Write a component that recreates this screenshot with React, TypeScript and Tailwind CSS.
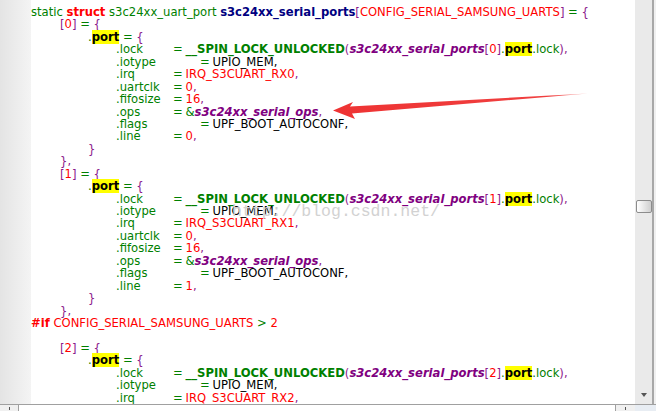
import React from "react";

const G = ({ children }: { children: React.ReactNode }) => <span className="text-[#008000]">{children}</span>;
const R = ({ children }: { children: React.ReactNode }) => <span className="text-[#ff0000]">{children}</span>;
const P = ({ children }: { children: React.ReactNode }) => <span className="text-[#8b1a8b]">{children}</span>;
const K = ({ children }: { children: React.ReactNode }) => <span className="text-black">{children}</span>;
const I = ({ children }: { children: React.ReactNode }) => <span className="text-[#800080] italic font-bold">{children}</span>;
const Y = ({ children }: { children: React.ReactNode }) => <span className="bg-[#ffff00] text-black font-bold">{children}</span>;

const Line = ({ indent, children }: { indent: 0 | 1 | 2 | 3; children?: React.ReactNode }) => {
  const pad = indent === 0 ? "pl-0" : indent === 1 ? "pl-[29px]" : indent === 2 ? "pl-[57px]" : "pl-[85px]";
  return <div className={`h-[12.45px] whitespace-pre ${pad}`}>{children}</div>;
};

const Field = ({ name, wide, children }: { name: string; wide?: boolean; children: React.ReactNode }) => (
  <Line indent={3}>
    <span className={`inline-block text-[#008000] ${wide ? "w-[84px]" : "w-[57px]"}`}>{name}</span>
    <span className="inline-block w-[12.5px] text-[#008000]">=</span>
    {children}
  </Line>
);

const Block = ({ n }: { n: string }) => (
  <>
    <Line indent={2}>
      <G>.</G>
      <Y>port</Y>
      <G> = </G>
      <P>{"{"}</P>
    </Line>
    <Field name=".lock">
      <span className="font-bold text-[#008000]">__SPIN_LOCK_UNLOCKED</span>
      <P>(</P>
      <I>s3c24xx_serial_ports</I>
      <P>[</P>
      <R>{n}</R>
      <P>]</P>
      <G>.</G>
      <Y>port</Y>
      <G>.lock</G>
      <P>),</P>
    </Field>
    <Field name=".iotype" wide>
      <K>UPIO_MEM,</K>
    </Field>
    <Field name=".irq">
      <R>IRQ_S3CUART_RX{n}</R>
      <P>,</P>
    </Field>
    {n !== "2" && (
      <>
        <Field name=".uartclk">
          <R>0</R>
          <P>,</P>
        </Field>
        <Field name=".fifosize">
          <R>16</R>
          <P>,</P>
        </Field>
        <Field name=".ops">
          <G>&amp;</G>
          <I>s3c24xx_serial_ops</I>
          <P>,</P>
        </Field>
        <Field name=".flags" wide>
          <K>UPF_BOOT_AUTOCONF,</K>
        </Field>
        <Field name=".line">
          <R>{n}</R>
          <P>,</P>
        </Field>
        <Line indent={2}>
          <P>{"}"}</P>
        </Line>
        <Line indent={1}>
          <P>{"},"}</P>
        </Line>
      </>
    )}
  </>
);

export default function App() {
  return (
    <div className="relative w-[656px] h-[411px] overflow-hidden bg-white flex flex-col">
      <div className="flex flex-1 min-h-0">
        <div className="w-[31px] shrink-0 bg-gradient-to-r from-[#e4e4e4] to-[#f4f4f4]" />
        <div
          className="flex-1 min-w-0 bg-white pt-[6px] text-[11.6px] leading-[12.45px] overflow-hidden"
          style={{ fontFamily: '"DejaVu Sans", Verdana, sans-serif' }}
        >
          <Line indent={0}>
            <G>static </G>
            <span className="font-bold text-[#ff0000]">struct</span>
            <G> s3c24xx_uart_port </G>
            <span className="font-bold text-[#000080]">s3c24xx_serial_ports</span>
            <P>[</P>
            <R>CONFIG_SERIAL_SAMSUNG_UARTS</R>
            <P>]</P>
            <G> = </G>
            <P>{"{"}</P>
          </Line>
          <Line indent={1}>
            <P>[</P>
            <R>0</R>
            <P>]</P>
            <G> = </G>
            <P>{"{"}</P>
          </Line>
          <Block n="0" />
          <Line indent={1}>
            <P>[</P>
            <R>1</R>
            <P>]</P>
            <G> = </G>
            <P>{"{"}</P>
          </Line>
          <Block n="1" />
          <Line indent={0}>
            <span className="font-bold text-[#ff0000]">#if</span>
            <R> CONFIG_SERIAL_SAMSUNG_UARTS </R>
            <G>&gt;</G>
            <R> 2</R>
          </Line>
          <Line indent={0} />
          <Line indent={1}>
            <P>[</P>
            <R>2</R>
            <P>]</P>
            <G> = </G>
            <P>{"{"}</P>
          </Line>
          <Block n="2" />
        </div>
        <div className="w-[17px] shrink-0 bg-[#eaeaea] flex flex-col items-center">
          <div className="h-[200px]" />
          <div className="w-[16px] h-[13px] border border-[#8c8c8c] rounded-[2px] bg-gradient-to-r from-[#ffffff] to-[#cfcfcf]" />
          <div className="flex-1" />
          <div className="mb-[7px] w-0 h-0 border-l-[3px] border-r-[3px] border-t-[4px] border-l-transparent border-r-transparent border-t-[#555555]" />
        </div>
        <div className="w-[2px] shrink-0 bg-[#a8a8a8]" />
        <div className="w-[2px] shrink-0 bg-[#f0f0f0]" />
      </div>
      <div className="h-[7px] shrink-0 flex border-t border-[#a0a0a0]">
        <div className="w-[18px] bg-[#f0f0f0] flex justify-center pt-[2px]">
          <div className="w-[1px] h-[3px] bg-[#555555]" />
        </div>
        <div className="w-[598px] bg-white border-l border-r border-[#a0a0a0]" />
        <div className="w-[19px] bg-[#f0f0f0] flex justify-center pt-[2px]">
          <div className="w-[1px] h-[3px] bg-[#555555]" />
        </div>
        <div className="flex-1 bg-[#e8edf3]" />
      </div>

      <div
        className="absolute left-[232px] top-[204px] text-[16.5px] leading-none text-[#d2d2d2] whitespace-pre pointer-events-none"
        style={{ fontFamily: '"Liberation Mono", monospace' }}
      >
        http://blog.csdn.net/
      </div>

      <svg className="absolute left-0 top-0 pointer-events-none" width="656" height="411" viewBox="0 0 656 411">
        <defs>
          <linearGradient id="arrowFade" x1="333" y1="0" x2="590" y2="0" gradientUnits="userSpaceOnUse">
            <stop offset="0" stopColor="#ee3333" />
            <stop offset="0.85" stopColor="#f04040" />
            <stop offset="1" stopColor="#f37070" stopOpacity="0.5" />
          </linearGradient>
        </defs>
        <polygon
          points="333,110.5 353,102 350,106.5 588,93.5 352,113.5 355,119"
          fill="url(#arrowFade)"
        />
      </svg>
    </div>
  );
}
